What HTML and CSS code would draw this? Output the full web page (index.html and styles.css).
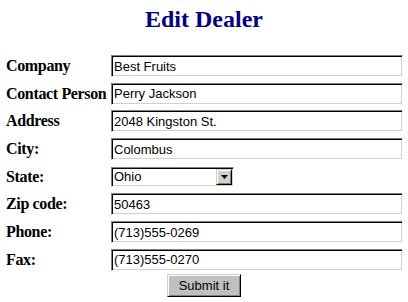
FILE: index.html
```html
<!DOCTYPE html>
<html>
<head>
<meta charset="utf-8">
<title>Edit Dealer</title>
<link rel="stylesheet" href="styles.css">
</head>
<body>
<div class="page">
  <h1 class="title">Edit Dealer</h1>
  <form class="form">
    <label class="label">Company</label>
    <input class="field" type="text" value="Best Fruits">
    <label class="label">Contact Person</label>
    <input class="field" type="text" value="Perry Jackson">
    <label class="label">Address</label>
    <input class="field" type="text" value="2048 Kingston St.">
    <label class="label">City:</label>
    <input class="field" type="text" value="Colombus">
    <label class="label">State:</label>
    <div class="select-wrap">
      <select class="select"><option>Ohio</option></select>
      <span class="select-btn"><svg width="7" height="4" viewBox="0 0 7 4"><path d="M0 0h7L3.5 4z" fill="#000"/></svg></span>
    </div>
    <label class="label">Zip code:</label>
    <input class="field" type="text" value="50463">
    <label class="label">Phone:</label>
    <input class="field" type="text" value="(713)555-0269">
    <label class="label">Fax:</label>
    <input class="field" type="text" value="(713)555-0270">
  </form>
  <div class="actions">
    <button class="submit" type="button">Submit it</button>
  </div>
</div>
</body>
</html>
```
FILE: styles.css
```css
html, body {
  margin: 0;
  padding: 0;
  background: #fff;
}
.page {
  width: 408px;
  height: 302px;
  overflow: hidden;
  display: flex;
  flex-direction: column;
}
.title {
  margin: 0;
  padding-top: 5px;
  height: 28px;
  line-height: 28px;
  text-align: center;
  font-family: "Liberation Serif", "Times New Roman", serif;
  font-weight: bold;
  font-size: 24px;
  color: #000080;
}
.form {
  margin: 22px 0 0 0;
  padding-left: 6px;
  display: grid;
  grid-template-columns: 105px 292px;
  grid-auto-rows: 22px;
  row-gap: 5.7px;
  align-items: center;
}
.label {
  font-family: "Liberation Serif", "Times New Roman", serif;
  font-weight: bold;
  font-size: 16px;
  letter-spacing: -0.35px;
  line-height: 22px;
  color: #000;
  white-space: nowrap;
}
.field {
  box-sizing: border-box;
  width: 292px;
  height: 22px;
  margin: 0;
  padding: 0 2px;
  font-family: "Liberation Sans", Arial, sans-serif;
  font-size: 13px;
  color: #000;
  background: #fff;
  border: 1px solid;
  border-color: #808080 #fff #fff #808080;
  box-shadow: inset 1px 1px 0 #000, inset -1px -1px 0 #d4d0c8;
  outline: none;
}
.select-wrap {
  position: relative;
  width: 123px;
  height: 20px;
}
.select {
  box-sizing: border-box;
  appearance: none;
  -webkit-appearance: none;
  width: 123px;
  height: 20px;
  margin: 0;
  padding: 0 2px;
  font-family: "Liberation Sans", Arial, sans-serif;
  font-size: 13px;
  color: #000;
  background: #fff;
  border: 1px solid;
  border-color: #808080 #fff #fff #808080;
  box-shadow: inset 1px 1px 0 #000, inset -1px -1px 0 #d4d0c8;
  border-radius: 0;
  outline: none;
}
.select-btn {
  position: absolute;
  top: 2px;
  right: 2px;
  width: 16px;
  height: 16px;
  box-sizing: border-box;
  background: #d4d0c8;
  border: 1px solid;
  border-color: #d4d0c8 #000 #000 #d4d0c8;
  box-shadow: inset 1px 1px 0 #fff, inset -1px -1px 0 #808080;
  display: flex;
  align-items: center;
  justify-content: center;
}
.actions {
  display: flex;
  justify-content: center;
  padding-top: 3px;
}
.submit {
  box-sizing: border-box;
  width: 74px;
  height: 23px;
  margin: 0;
  padding: 0;
  font-family: "Liberation Sans", Arial, sans-serif;
  font-size: 13px;
  color: #000;
  background: #c0c0c0;
  border: 1px solid;
  border-color: #d4d0c8 #000 #000 #d4d0c8;
  box-shadow: inset 1px 1px 0 #fff, inset -1px -1px 0 #808080;
  border-radius: 0;
}
```
